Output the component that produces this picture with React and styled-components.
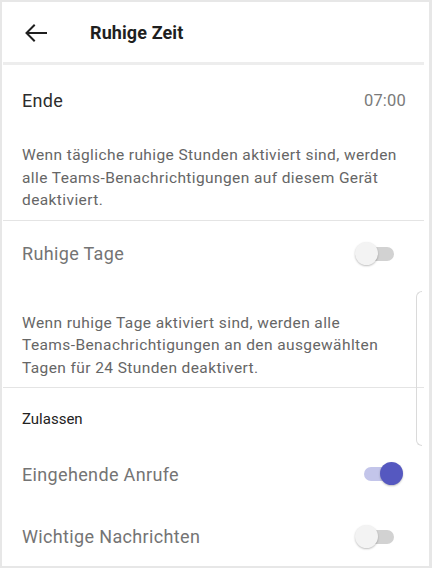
import React, { useState } from 'react'
import styled, { createGlobalStyle } from 'styled-components'

const GlobalStyle = createGlobalStyle`
  html, body {
    margin: 0;
    padding: 0;
    background: #ffffff;
  }
  body {
    font-family: Roboto, "Liberation Sans", Arial, sans-serif;
  }
`

const Toggle = ({ on, onClick }) => (
  <SwitchBox onClick={onClick}>
    <Track on={on ? 1 : 0} />
    <Knob on={on ? 1 : 0} />
  </SwitchBox>
)

const BackArrow = () => (
  <svg width="24" height="20" viewBox="0 0 24 20" fill="none">
    <path d="M22 10H3M10 2.5L2.5 10L10 17.5" stroke="#1f1f1f" strokeWidth="2" strokeLinecap="square" />
  </svg>
)

// Android doesn't break lines at the hyphen in "Teams-..."
const teams = 'Teams\u2011Benachrichtigungen'

const App = () => {
  const [quietDays, setQuietDays] = useState(false)
  const [calls, setCalls] = useState(true)
  const [important, setImportant] = useState(false)

  return (
    <>
      <GlobalStyle />
      <Frame>
        <Content>
          <Header>
            <BackButton>
              <BackArrow />
            </BackButton>
            <Title>Ruhige Zeit</Title>
          </Header>

          <Row height={70}>
            <Label dark>Ende</Label>
            <Value>07:00</Value>
          </Row>
          <Description top={9} bottom={8}>
            {`Wenn tägliche ruhige Stunden aktiviert sind, werden alle ${teams} auf diesem Gerät deaktiviert.`}
          </Description>
          <Divider />

          <Row height={66}>
            <Label>Ruhige Tage</Label>
            <Toggle on={quietDays} onClick={() => setQuietDays((v) => !v)} />
          </Row>
          <Description top={25} bottom={8}>
            {`Wenn ruhige Tage aktiviert sind, werden alle ${teams} an den ausgewählten Tagen für 24 Stunden deaktivert.`}
          </Description>
          <Divider />

          <SectionTitle>Zulassen</SectionTitle>
          <Row height={62}>
            <Label>Eingehende Anrufe</Label>
            <Toggle on={calls} onClick={() => setCalls((v) => !v)} />
          </Row>
          <Row height={63}>
            <Label>Wichtige Nachrichten</Label>
            <Toggle on={important} onClick={() => setImportant((v) => !v)} />
          </Row>

          <ScrollHint />
        </Content>
      </Frame>
    </>
  )
}

export default App

const Frame = styled.div`
  position: relative;
  width: 432px;
  height: 568px;
  box-sizing: border-box;
  border: 2px solid #e7e7e7;
  border-right-width: 3px;
  background: #fff;
  overflow: hidden;
`

const Content = styled.div`
  position: relative;
  margin-left: 1px;
  margin-right: 5px;
  display: flex;
  flex-direction: column;
`

const Header = styled.div`
  height: 60px;
  display: flex;
  align-items: center;
  padding-left: 21px;
  border-bottom: 3px solid #ededed;
`

const BackButton = styled.div`
  width: 24px;
  height: 20px;
  display: flex;
  align-items: center;
  margin-right: 42px;
  margin-top: 1px;
`

const Title = styled.h1`
  margin: 0;
  font-size: 18px;
  font-weight: 700;
  color: #1f1f1f;
  letter-spacing: 0.1px;
`

const Row = styled.div`
  height: ${(p) => p.height}px;
  display: flex;
  align-items: center;
  justify-content: space-between;
  padding: 0 21px 0 19px;
`

const Label = styled.span`
  font-size: 18px;
  letter-spacing: 0.35px;
  color: ${(p) => (p.dark ? '#2c2c2c' : '#747474')};
`

const Value = styled.span`
  font-size: 16.5px;
  letter-spacing: 0.2px;
  color: #7a7a7a;
  margin-right: -3px;
`

const Description = styled.p`
  margin: 0;
  padding: ${(p) => p.top}px 22px ${(p) => p.bottom}px 19px;
  font-size: 15.5px;
  letter-spacing: 0.4px;
  line-height: 22.5px;
  color: #666;
`

const Divider = styled.div`
  height: 1px;
  background: #e4e4e4;
`

const SectionTitle = styled.div`
  padding: 21px 19px 14px;
  font-size: 15px;
  line-height: 20px;
  color: #222;
`

const SwitchBox = styled.div`
  position: relative;
  width: 48px;
  height: 24px;
  cursor: pointer;
`

const Track = styled.div`
  position: absolute;
  top: 5px;
  left: ${(p) => (p.on ? 9 : 8)}px;
  width: 31px;
  height: 14px;
  border-radius: 7px;
  background: ${(p) => (p.on ? '#c3c5ea' : '#d2d2d2')};
`

const Knob = styled.div`
  position: absolute;
  top: 0;
  left: ${(p) => (p.on ? 25 : 0)}px;
  width: 23px;
  height: 23px;
  border-radius: 50%;
  background: ${(p) => (p.on ? '#5558c0' : '#f3f3f3')};
  box-shadow: 0 1px 2px rgba(0, 0, 0, 0.25);
`

const ScrollHint = styled.div`
  position: absolute;
  top: 289px;
  right: 2px;
  width: 5px;
  height: 153px;
  border: 1px solid #dadada;
  border-right: none;
  border-radius: 6px 0 0 6px;
`
